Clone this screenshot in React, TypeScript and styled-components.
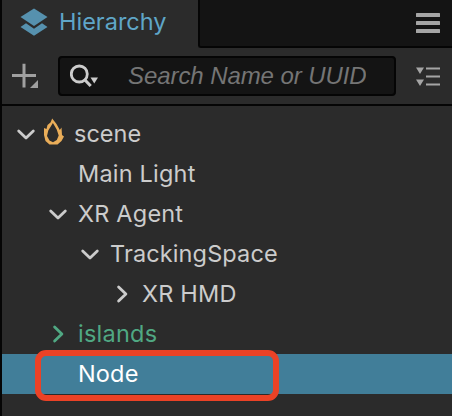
import React from 'react';
import styled, { createGlobalStyle } from 'styled-components';

const Global = createGlobalStyle`
  * { box-sizing: border-box; }
  body { margin: 0; background: #2b2b2b; overflow: hidden; }
`;

const Panel = styled.div`
  width: 452px;
  height: 416px;
  border-left: 2px solid #050505;
  background: #2b2b2b;
  color: #cccccc;
  font-family: Inter, "Liberation Sans", sans-serif;
  font-size: 23.5px;
  overflow: hidden;
`;

const Header = styled.header`
  display: flex;
  height: 48px;
`;

const Tab = styled.div`
  display: flex;
  align-items: center;
  width: 196px;
  padding: 0 0 4px 18px;
  gap: 11px;
  color: #5fa6c8;
  svg { flex: none; }
`;

const Label = styled.span<{ $spacing?: number }>`
  letter-spacing: ${p => p.$spacing ?? 0}px;
  line-height: 40px;
  white-space: pre;
`;

const HeaderFill = styled.div`
  flex: 1;
  display: flex;
  justify-content: flex-end;
  align-items: center;
  padding: 0 12px 0 0;
  background: #141414;
  border-left: 2px solid #050505;
  border-bottom: 2px solid #050505;
  border-bottom-left-radius: 3px;
`;

const Toolbar = styled.div`
  display: flex;
  align-items: center;
  height: 58px;
  padding: 0 12px 0 10px;
  border-bottom: 2px solid #050505;
  svg { flex: none; }
`;

const Search = styled.div`
  display: flex;
  align-items: center;
  width: 340px;
  height: 40px;
  margin: 0 20px 0 18px;
  padding-left: 10px;
  background: #141414;
  border: 2px solid #050505;
  border-radius: 4px;
`;

const Placeholder = styled.span`
  width: 238px;
  margin-left: 29px;
  overflow: hidden;
  color: #757575;
  font-family: "Liberation Sans", sans-serif;
  font-size: 24px;
  font-style: italic;
  line-height: 34px;
  letter-spacing: -0.08px;
  white-space: nowrap;
`;

const Tree = styled.div`
  padding-top: 8px;
`;

const Row = styled.div<{ $indent: number; $color?: string; $selected?: boolean }>`
  position: relative;
  display: flex;
  align-items: center;
  height: 40px;
  padding-left: ${p => p.$indent}px;
  color: ${p => p.$color ?? '#cccccc'};
  background: ${p => (p.$selected ? '#417e99' : 'transparent')};
`;

const Toggle = styled.span<{ $width?: number }>`
  display: flex;
  width: ${p => p.$width ?? 30}px;
  flex: none;
`;

const Flame = styled.svg`
  flex: none;
  margin: -5px 10px 0 -2px;
`;

const Highlight = styled.div`
  position: absolute;
  left: 33px;
  top: -4px;
  width: 244px;
  height: 51px;
  border: 6px solid #eb4226;
  border-radius: 11px;
`;

const Chevron = ({ open }: { open: boolean }) => (
  <svg width="20" height="20" viewBox="0 0 20 20" fill="none" stroke="currentColor" strokeWidth="2.8" strokeLinecap="round" strokeLinejoin="round">
    <path d={open ? 'M2.7 7L10 14L17.3 7' : 'M6.6 2.9L13.9 10L6.6 17.1'} />
  </svg>
);

const nodes = [
  { name: 'Main Light', indent: 46, spacing: 0.2 },
  { name: 'XR Agent', indent: 46, spacing: 0.2, open: true },
  { name: 'TrackingSpace', indent: 78, spacing: 0.12, open: true },
  { name: 'XR HMD', indent: 110, spacing: 0.2, open: false },
  { name: 'islands', indent: 46, spacing: 0.25, open: false, color: '#50a883' },
];

export default function App() {
  return (
    <Panel>
      <Global />
      <Header>
        <Tab>
          <svg width="28" height="28" viewBox="0 0 28 28" fill="#5691ae">
            <path d="M14 0.5L27.5 9L14 18L0.5 9Z" />
            <path d="M0.5 19L6 15.3L14 20.8L22 15.3L27.5 19L14 27.8Z" />
          </svg>
          <Label>Hierarchy</Label>
        </Tab>
        <HeaderFill>
          <svg width="24" height="20" viewBox="0 0 24 20" fill="#a5a5a5">
            <rect width="24" height="4" rx="0.5" />
            <rect y="8" width="24" height="4" rx="0.5" />
            <rect y="16" width="24" height="4" rx="0.5" />
          </svg>
        </HeaderFill>
      </Header>
      <Toolbar>
        <svg width="28" height="26" viewBox="0 0 28 26" fill="#a0a0a0">
          <path d="M10.5 .8h3v10.2H24v3H13.5V24.5h-3V14H0v-3h10.5z" />
          <path d="M26 17v8h-8z" />
        </svg>
        <Search>
          <svg width="29" height="24" viewBox="0 0 29 24" fill="none" stroke="#cccccc">
            <circle cx="9.3" cy="10" r="8" strokeWidth="2.8" />
            <path d="M15 16L20.7 22" strokeWidth="3.1" />
            <path d="M20.5 13.5h7.5l-3.75 6z" fill="#cccccc" stroke="none" />
          </svg>
          <Placeholder>Search Name or UUID</Placeholder>
        </Search>
        <svg width="24" height="19" viewBox="0 0 24 19" fill="#a5a5a5">
          <path d="M0 .5h8L4 7zM0 12.5h8L4 19z" />
          <path d="M10 .5h14v2H10zM10 8.5h14v2H10zM10 16.5h14v2H10z" />
        </svg>
      </Toolbar>
      <Tree>
        <Row $indent={14}>
          <Toggle $width={28}><Chevron open /></Toggle>
          <Flame width="22" height="28" viewBox="0 0 22 28">
            <path fill="#e9ad59" fillRule="evenodd" d="M10.2 .5L14.5 6L17.8 12L19.5 9.5L20 17L22 18.5L19.5 23L15.5 26.5H7.5L3.5 23L2 17V10L4.5 11L5.5 7L8.5 4.5ZM10.9 5L6.3 12.5L5 18L7.5 22.5L11 24.3L14.8 22L16.7 17.5L14.7 11.5Z" />
          </Flame>
          <Label>scene</Label>
        </Row>
        {nodes.map(n => (
          <Row key={n.name} $indent={n.indent} $color={n.color}>
            {n.open !== undefined ? <Toggle><Chevron open={n.open} /></Toggle> : <Toggle />}
            <Label $spacing={n.spacing}>{n.name}</Label>
          </Row>
        ))}
        <Row $indent={76} $color="#ffffff" $selected>
          <Label $spacing={0.15}>Node</Label>
          <Highlight />
        </Row>
      </Tree>
    </Panel>
  );
}
